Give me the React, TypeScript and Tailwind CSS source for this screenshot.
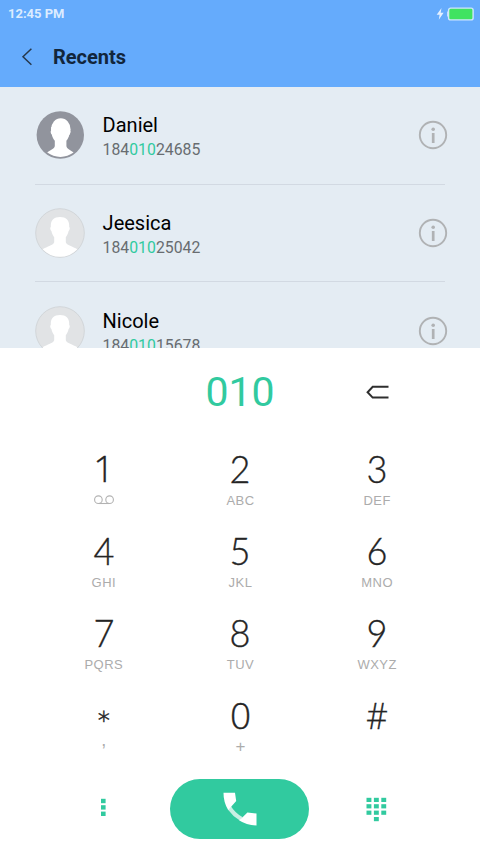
import React from "react";
import clsx from "clsx";

const contacts = [
  { name: "Daniel", number: ["184", "010", "24685"], dark: true },
  { name: "Jeesica", number: ["184", "010", "25042"], dark: false },
  { name: "Nicole", number: ["184", "010", "15678"], dark: false },
];

const lato = "font-[Lato,sans-serif] text-[38px] font-light scale-x-[0.95] leading-[43px]";
const openSans = "font-['Open_Sans',sans-serif] text-[37px] font-light leading-[41px]";

const keys = [
  { digit: "1", label: "", face: openSans },
  { digit: "2", label: "ABC", face: lato },
  { digit: "3", label: "DEF", face: lato },
  { digit: "4", label: "GHI", face: lato },
  { digit: "5", label: "JKL", face: lato },
  { digit: "6", label: "MNO", face: lato },
  { digit: "7", label: "PQRS", face: lato },
  { digit: "8", label: "TUV", face: lato },
  { digit: "9", label: "WXYZ", face: lato },
  { digit: "*", label: ",", face: "font-[Lato,sans-serif] text-[38px] font-light leading-[61px]" },
  { digit: "0", label: "+", face: openSans },
  { digit: "#", label: "", face: `${openSans} scale-x-[0.9]` },
];

function Avatar({ dark }: { dark: boolean }) {
  if (dark) {
    return (
      <svg width="50" height="50" viewBox="0 0 50 50" className="shrink-0">
        <circle cx="25.3" cy="25" r="23.7" fill="#91949d" />
        <ellipse cx="25.8" cy="19.5" rx="9.8" ry="11.3" fill="#fff" />
        <path
          d="M16.2 17V20.5C15.3 21 15.6 23.6 16.8 24.6C17.4 27.5 18.4 29 19.8 30.8V36C19.6 39.2 14.6 40.2 12.2 42.6A22.5 22.5 0 0 0 38.6 42.6C36 40.2 31.6 39.2 31.4 36V30.8C32.8 29 33.7 27.5 34.3 24.6C35.6 23.6 35.9 21 35 20.5V17Z"
          fill="#fff"
        />
      </svg>
    );
  }
  return (
    <svg width="50" height="50" viewBox="0 0 50 50" className="shrink-0">
      <circle cx="25" cy="25" r="24.3" fill="#e1e3e5" stroke="#d2d6d9" strokeWidth="1" />
      <path
        d="M25 9C19 9 15.8 12.3 15.8 17.5V19C14.8 19.5 15.2 22.2 16.4 23C17 26 18 27.5 19.2 29.2V34C18.6 37.5 12 38.3 7.6 41.3A23.8 23.8 0 0 0 42.4 41.3C38 38.3 31.4 37.5 30.8 34V29.2C32 27.5 33 26 33.6 23C34.8 22.2 35.2 19.5 34.2 19V17.5C34.2 12.3 31 9 25 9Z"
        fill="#fff"
      />
    </svg>
  );
}

function InfoIcon() {
  return (
    <svg width="30" height="30" viewBox="0 0 30 30" fill="none" className="shrink-0">
      <circle cx="15" cy="15" r="13.2" stroke="#b0b2b4" strokeWidth="1.9" />
      <circle cx="15.2" cy="9.2" r="1.8" fill="#b0b2b4" />
      <path d="M15.2 13V23" stroke="#b0b2b4" strokeWidth="2.7" />
    </svg>
  );
}

function Header() {
  return (
    <header className="h-[86.5px] shrink-0 bg-[#65abfc]">
      <div className="flex h-7 items-center justify-between pl-2 pr-[6px]">
        <span className="text-[13px] font-bold leading-4 text-[#dcecff]">12:45 PM</span>
        <svg width="38" height="14" viewBox="0 0 38 14">
          <path d="M5.5 1L0.7 7.7H3.6L2.8 12.8L7.6 5.8H4.7Z" fill="#e4f0ff" />
          <path d="M12.5 4.5H11.2V9.5H12.5Z" fill="#dcebff" />
          <rect x="12.6" y="1.1" width="24.5" height="11.8" rx="2" fill="#40e361" stroke="#cfe6ff" strokeWidth="1.4" />
        </svg>
      </div>
      <div className="flex h-[57px] items-center pl-[21px]">
        <svg width="12" height="18" viewBox="0 0 12 18" fill="none">
          <path d="M10.4 0.7L2 8.7L10.4 16.7" stroke="#26384c" strokeWidth="1.5" />
        </svg>
        <h1 className="ml-[20px] pt-px text-[20px] font-bold leading-6 text-[#12263c]">Recents</h1>
      </div>
    </header>
  );
}

function Key({ digit, label, face }: { digit: string; label: string; face: string }) {
  return (
    <button className="flex h-[82.2px] flex-col items-center pl-px">
      <span className={clsx("h-[45px] text-[#242424] [-webkit-text-stroke:0.35px_#242424]", face)}>
        {digit}
      </span>
      {digit === "1" ? (
        <svg width="20" height="10" viewBox="0 0 20 10" fill="none" stroke="#b2b2b2" strokeWidth="1.1" className="mt-[3px]">
          <circle cx="4.4" cy="4.7" r="3.8" />
          <circle cx="15.6" cy="4.7" r="3.8" />
          <path d="M4.4 8.5H15.6" />
        </svg>
      ) : (
        <span
          className={clsx(
            "font-['Liberation_Sans',sans-serif] text-[#acacac]",
            label === "+" && "text-[17px] leading-4",
            label === "," && "text-[18px] leading-[3px]",
            label.length > 1 && "text-[13px] leading-[17px] tracking-[0.5px]"
          )}
        >
          {label}
        </span>
      )}
    </button>
  );
}

export default function App() {
  return (
    <div className="flex h-[853px] w-[480px] flex-col overflow-hidden bg-white font-[Roboto,sans-serif]">
      <Header />

      {/* Matching calls */}
      <div className="h-[261px] shrink-0 overflow-hidden bg-[#e4ecf3] pt-[0.5px]">
        {contacts.map((c) => (
          <div key={c.name} className="mx-[35px] h-[97.7px] border-b border-[#d2d9e2]">
            <div className="-mr-[3px] flex h-full items-center">
              <Avatar dark={c.dark} />
              <div className="ml-[17.6px] flex-1 pt-[5px]">
                <div className="text-[20px] leading-6 text-black">{c.name}</div>
                <div className="mt-px text-[15.8px] leading-6 text-[#686c70]">
                  {c.number[0]}
                  <span className="text-[#31ca9f]">{c.number[1]}</span>
                  {c.number[2]}
                </div>
              </div>
              <InfoIcon />
            </div>
          </div>
        ))}
      </div>

      {/* Typed number */}
      <div className="grid h-[99.5px] shrink-0 grid-cols-3 px-[35px]">
        <div className="col-start-2 pt-[20px] text-center text-[41px] leading-[48px] text-[#31ca9f]">010</div>
        <div className="flex justify-center pt-[37px]">
          <svg width="24" height="15" viewBox="0 0 24 15" fill="none">
            <path d="M23.5 1.8H7.7L2.6 7.2L7.7 12.6H23.5" stroke="#2e2e2e" strokeWidth="2" />
          </svg>
        </div>
      </div>

      <div className="grid shrink-0 grid-cols-3 px-[35px]">
        {keys.map((k) => (
          <Key key={k.digit} digit={k.digit} label={k.label} face={k.face} />
        ))}
      </div>

      <div className="grid flex-1 grid-cols-3 items-start justify-items-center px-[35px] pt-[3px]">
        <svg width="6" height="60" viewBox="0 0 6 60" fill="#31ca9f">
          <rect x="1" y="19.8" width="4.6" height="4.4" />
          <rect x="1" y="26.2" width="4.6" height="4.4" />
          <rect x="1" y="32.6" width="4.6" height="4.4" />
        </svg>
        <button className="-mx-2 flex h-[60px] w-[139px] items-center justify-center rounded-full bg-[#31ca9f]">
          <svg width="34" height="34" viewBox="0 0 34 34">
            <path d="M8 14.2Q12 21 19.8 25.2L16.5 28.3Q9.5 24 5.3 18Z" fill="#c9f0e4" />
            <path d="M0.5 0.8H12L13.2 9L8.6 14.2L5.3 18.2Q0.4 10.5 0.5 0.8Z" fill="#fff" />
            <path d="M24.4 20.6L33.5 21.6V33.5Q23.5 33.2 16 28.2L19.6 25.2Z" fill="#fff" />
          </svg>
        </button>
        <svg width="21" height="60" viewBox="0 0 21 60" fill="#31ca9f">
          {[0, 1, 2].map((row) =>
            [0, 1, 2].map((col) => (
              <rect key={`${row}-${col}`} x={0.5 + col * 7.4} y={18.8 + row * 6.4} width="4.9" height="4.2" />
            ))
          )}
          <rect x="7.9" y="38" width="4.9" height="4.2" />
        </svg>
      </div>
    </div>
  );
}
